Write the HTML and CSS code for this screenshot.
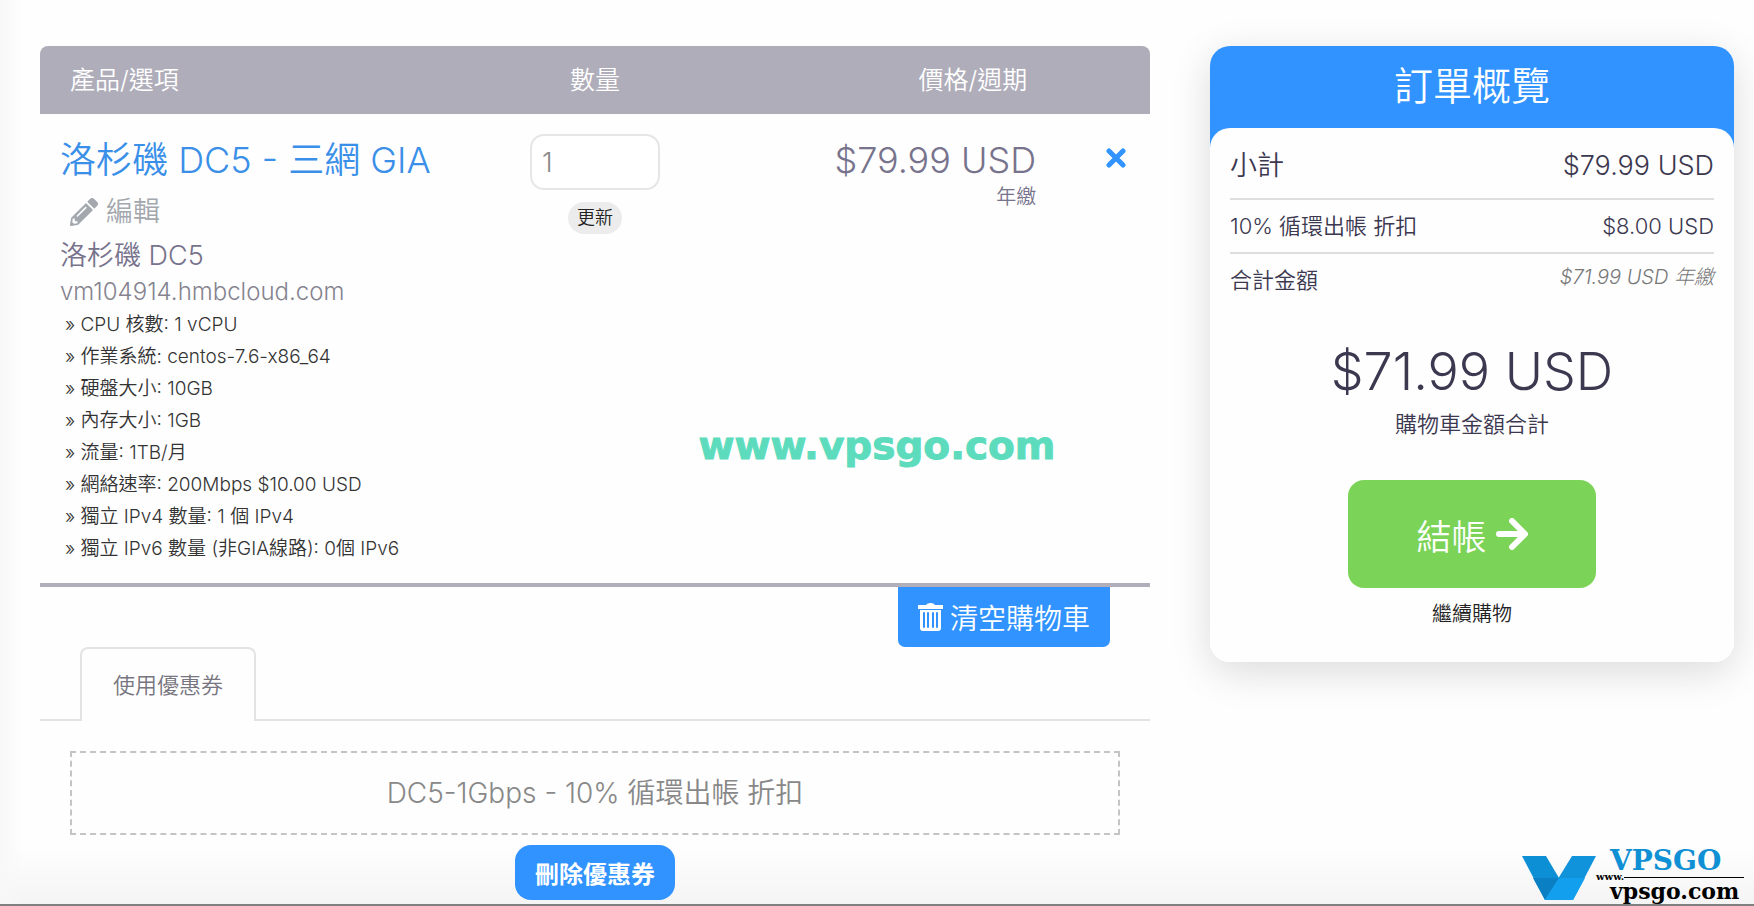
FILE: index.html
```html
<!DOCTYPE html>
<html lang="zh-Hant">
<head>
    <meta charset="utf-8">
    <meta name="viewport" content="width=device-width, initial-scale=1.0">
    <title>購物車</title>
    <link rel="stylesheet" href="styles.css">
</head>
<body>
    <div class="page">
        <main class="cart">
            <table class="items">
                <thead>
                    <tr>
                        <th class="col-product">產品/選項</th>
                        <th class="col-qty">數量</th>
                        <th class="col-price">價格/週期</th>
                        <th class="col-remove"></th>
                    </tr>
                </thead>
                <tbody>
                    <tr>
                        <td class="col-product">
                            <h2 class="item-title">洛杉磯 DC5 - 三網 GIA</h2>
                            <a class="item-edit" href="#">
                                <svg width="28" height="28" viewBox="0 0 512 512" fill="currentColor" aria-hidden="true"><path d="M498 142l-46 46c-5 5-13 5-17 0L324 77c-5-5-5-12 0-17l46-46c19-19 49-19 68 0l60 60c19 19 19 49 0 68zm-214-42L22 362 0 484c-3 16 12 30 28 28l122-22 262-262c5-5 5-13 0-17L301 100c-4-5-12-5-17 0zM124 340c-5-6-5-14 0-20l154-154c6-5 14-5 20 0s5 14 0 20L144 340c-6 5-14 5-20 0zm-36 84h48v36l-64 12-32-31 12-65h36v48z"/></svg>
                                編輯
                            </a>
                            <p class="item-group">洛杉磯 DC5</p>
                            <p class="item-domain">vm104914.hmbcloud.com</p>
                            <ul class="options">
                                <li>» CPU 核數: 1 vCPU</li>
                                <li>» 作業系統: centos-7.6-x86_64</li>
                                <li>» 硬盤大小: 10GB</li>
                                <li>» 內存大小: 1GB</li>
                                <li>» 流量: 1TB/月</li>
                                <li>» 網絡速率: 200Mbps $10.00 USD</li>
                                <li>» 獨立 IPv4 數量: 1 個 IPv4</li>
                                <li>» 獨立 IPv6 數量 (非GIA線路): 0個 IPv6</li>
                            </ul>
                        </td>
                        <td class="col-qty">
                            <input class="qty" type="text" value="1" aria-label="數量">
                            <button class="update" type="button">更新</button>
                        </td>
                        <td class="col-price">
                            <p class="price">$79.99 USD</p>
                            <p class="cycle">年繳</p>
                        </td>
                        <td class="col-remove">
                            <button class="remove" type="button" aria-label="移除">
                                <svg width="20" height="20" viewBox="0 0 20 20" fill="none" stroke="currentColor" stroke-width="5" stroke-linecap="round" aria-hidden="true"><path d="M3 3l14 14M17 3L3 17"/></svg>
                            </button>
                        </td>
                    </tr>
                </tbody>
            </table>

            <button class="empty-cart" type="button">
                <svg width="25" height="28" viewBox="0 0 25 28" aria-hidden="true">
                    <path fill="currentColor" d="M0 2h8q1-2 4.500-2T17 2h8v4H0zM2 7h21v18q0 3-3 3H5q-3 0-3-3z"/>
                    <path stroke="#3093ff" stroke-width="2" stroke-linecap="round" d="M6 10v14M10 10v14M15 10v14M19 10v14"/>
                </svg>
                清空購物車
            </button>

            <nav class="tabs">
                <a class="tab" href="#coupon">使用優惠券</a>
            </nav>

            <section class="coupon" id="coupon">
                <p class="coupon-name">DC5-1Gbps - 10% 循環出帳 折扣</p>
                <button class="coupon-remove" type="button">刪除優惠券</button>
            </section>
        </main>

        <aside class="summary">
            <h2 class="summary-title">訂單概覽</h2>
            <div class="summary-body">
                <div class="line line-subtotal">
                    <span>小計</span>
                    <span>$79.99 USD</span>
                </div>
                <div class="line">
                    <span>10% 循環出帳 折扣</span>
                    <span>$8.00 USD</span>
                </div>
                <div class="line line-total">
                    <span>合計金額</span>
                    <em class="recurring">$71.99 USD 年繳</em>
                </div>
                <p class="total">$71.99 USD</p>
                <p class="total-label">購物車金額合計</p>
                <button class="checkout" type="button">
                    結帳
                    <svg width="32" height="32" viewBox="0 0 32 32" fill="none" stroke="currentColor" stroke-width="6" stroke-linecap="round" stroke-linejoin="round" aria-hidden="true"><path d="M3 16h24M16 3l13 13-13 13"/></svg>
                </button>
                <a class="continue" href="#">繼續購物</a>
            </div>
        </aside>
    </div>

    <div class="watermark">www.vpsgo.com</div>

    <div class="logo">
        <svg class="logo-mark" width="74" height="44" viewBox="0 0 74 44" aria-hidden="true">
            <path fill="#0d8fd6" d="M0 0h24l13 22-14 22z"/>
            <path fill="#1193dc" d="M50 0h24L51 44H23z"/>
            <path fill="#0a7fc4" d="M11 22h26L23 44z"/>
            <path fill="#12a0ee" d="M37 22h26L51 44H23z"/>
        </svg>
        <div class="logo-text">
            <span class="logo-name">VPSGO</span>
            <span class="logo-www">www.</span>
            <span class="logo-url">vpsgo.com</span>
        </div>
    </div>
</body>
</html>
```

FILE: styles.css
```css
* {
    box-sizing: border-box;
    margin: 0;
    padding: 0;
}
body {
    position: relative;
    min-height: 100vh;
    font-family: Inter, "Noto Sans CJK TC", sans-serif;
    font-weight: 350;
    color: #3b3850;
    background:
        linear-gradient(to right, #f8f8f8, rgba(253, 253, 253, 0) 24px),
        linear-gradient(to top, #f4f4f4, #fefefe 60px);
    border-bottom: 2px solid #808080;
}
button, input {
    font: inherit;
    border: 0;
}
a {
    text-decoration: none;
}
.page {
    display: grid;
    grid-template-columns: 1110fr 524fr;
    column-gap: 60px;
    align-items: start;
    padding: 46px 20px 0 40px;
}

/* cart table */
.cart {
    display: flex;
    flex-direction: column;
}
.items {
    width: 100%;
    table-layout: fixed;
    border-spacing: 0;
    border-bottom: 4px solid #b0aeba;
}
.items th {
    height: 68px;
    background: #afadba;
    color: #fff;
    font-size: 25px;
    font-weight: 350;
    line-height: 36px;
}
.items th:first-child {
    border-top-left-radius: 8px;
}
.items th:last-child {
    border-top-right-radius: 8px;
}
.items td {
    vertical-align: top;
    padding-top: 24px;
}
.col-product {
    width: 40%;
    text-align: left;
}
.col-qty {
    width: 20%;
    text-align: center;
}
.col-price {
    width: 32%;
    text-align: right;
}
.col-remove {
    width: 8%;
    text-align: right;
}
th.col-product {
    padding-left: 30px;
}
th.col-price {
    padding-right: 34px;
}
td.col-product {
    padding-left: 20px;
    padding-bottom: 18px;
}
.items td.col-qty {
    padding-top: 20px;
}
td.col-price {
    padding-right: 25px;
}
td.col-remove {
    padding-right: 24px;
}
.item-title {
    font-size: 36px;
    font-weight: 350;
    line-height: 44px;
    color: #3a8fe8;
}
.item-edit {
    display: flex;
    align-items: center;
    gap: 8px;
    margin: 12px 0 8px;
    padding-left: 10px;
    font-size: 27px;
    line-height: 36px;
    color: #a3a8ae;
}
.item-group {
    font-size: 27px;
    line-height: 36px;
    color: #77738c;
}
.item-domain {
    font-size: 24px;
    font-weight: 300;
    line-height: 35px;
    color: #85838f;
}
.options {
    list-style: none;
    padding-left: 5px;
    font-size: 19px;
    line-height: 32px;
    color: #333;
    white-space: nowrap;
}
.qty {
    display: block;
    width: 130px;
    height: 56px;
    margin: 0 auto 12px;
    padding: 0 10px;
    font-size: 27px;
    color: #888;
    background: #fff;
    border: 2px solid #e6e6e8;
    border-radius: 14px;
}
.update {
    height: 32px;
    padding: 0 9px;
    font-size: 18px;
    line-height: 32px;
    color: #222;
    background: #ececec;
    border-radius: 16px;
}
.price {
    font-size: 36px;
    line-height: 44px;
    color: #77738c;
}
.cycle {
    font-size: 20px;
    line-height: 30px;
    color: #77738c;
}
.remove {
    height: 44px;
    color: #3093ff;
    background: none;
}
.empty-cart {
    display: flex;
    align-items: center;
    align-self: flex-end;
    gap: 7px;
    height: 60px;
    margin-right: 40px;
    padding: 0 20px;
    font-size: 28px;
    color: #fff;
    background: #3093ff;
    border-radius: 0 0 7px 7px;
}

/* coupon */
.tabs {
    display: flex;
    padding-left: 40px;
    border-bottom: 2px solid #e3e3e6;
}
.tab {
    height: 74px;
    margin-bottom: -2px;
    padding: 0 31px;
    font-size: 22px;
    line-height: 72px;
    color: #77757f;
    background: #fefefe;
    border: 2px solid #e3e3e6;
    border-bottom: 0;
    border-radius: 8px 8px 0 0;
}
.coupon {
    padding: 30px 30px 0;
    text-align: center;
}
.coupon-name {
    margin-bottom: 10px;
    font-size: 28px;
    line-height: 80px;
    color: #888;
    border: 2px dashed #c4c4c4;
}
.coupon-remove {
    height: 55px;
    padding: 0 20px;
    font-size: 24px;
    font-weight: 700;
    color: #fff;
    background: #3093ff;
    border-radius: 16px;
}

/* order summary */
.summary {
    background: linear-gradient(#3093ff 120px, #fefefe 120px);
    border-radius: 20px;
    box-shadow: 0 10px 40px rgba(0, 0, 0, 0.14);
}
.summary-title {
    height: 82px;
    font-size: 39px;
    font-weight: 350;
    line-height: 80px;
    text-align: center;
    color: #fff;
}
.summary-body {
    display: flex;
    flex-direction: column;
    align-items: center;
    padding: 6px 20px 32px;
    background: #fefefe;
    border-radius: 20px;
}
.line {
    display: flex;
    justify-content: space-between;
    width: 100%;
    font-size: 22px;
    line-height: 52px;
    border-bottom: 2px solid #dedee0;
}
.line-subtotal {
    font-size: 27px;
    line-height: 64px;
}
.line-total {
    border-bottom: 0;
}
.recurring {
    font-size: 20px;
    font-weight: 300;
    line-height: 46px;
    color: #777;
}
.total {
    margin-top: 34px;
    font-size: 52px;
    font-weight: 300;
    line-height: 64px;
}
.total-label {
    font-size: 22px;
    line-height: 40px;
}
.checkout {
    display: flex;
    align-items: center;
    gap: 9px;
    height: 108px;
    margin: 36px 0 10px;
    padding: 0 68px;
    font-size: 35px;
    color: #fff;
    background: #7bd357;
    border-radius: 16px;
}
.continue {
    font-size: 20px;
    line-height: 32px;
    color: #222;
}

/* overlays */
.watermark {
    position: absolute;
    top: 420px;
    left: 0;
    width: 100%;
    font-family: "DejaVu Sans", sans-serif;
    font-size: 39px;
    font-weight: 700;
    line-height: 52px;
    text-align: center;
    color: #5ddcbd;
    -webkit-text-stroke: 1px #5ddcbd;
    pointer-events: none;
}
.logo {
    position: absolute;
    right: 0;
    bottom: -2px;
    display: flex;
    align-items: flex-end;
    width: 252px;
    padding: 0 0 4px 20px;
    font-family: "DejaVu Serif", serif;
    font-weight: 700;
    border-bottom: 2px solid #222;
}
.logo-text {
    display: grid;
    grid-template-columns: auto 1fr;
    width: 148px;
}
.logo-name {
    grid-column: 1 / 3;
    padding-left: 14px;
    font-size: 28px;
    line-height: 22px;
    color: #1090d4;
}
.logo-www {
    font-size: 10px;
    line-height: 10px;
    color: #000;
}
.logo-text::after {
    content: "";
    grid-area: 2 / 2;
    align-self: center;
    height: 1px;
    background: #000;
}
.logo-url {
    grid-column: 1 / 3;
    padding-left: 14px;
    font-size: 22px;
    line-height: 18px;
    color: #000;
}
```
